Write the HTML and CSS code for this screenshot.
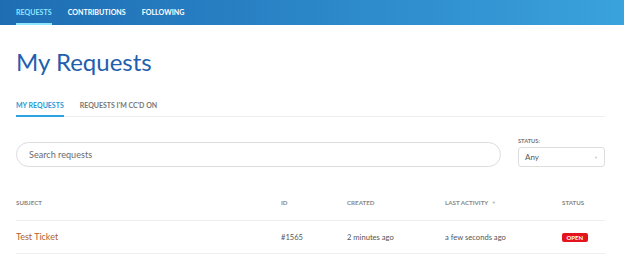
FILE: index.html
```html
<!DOCTYPE html>
<html lang="en">
<head>
  <meta charset="UTF-8" />
  <title>My Requests</title>
  <link rel="stylesheet" href="styles.css">
</head>
<body>

  <nav class="topnav">
    <a class="topnav-item active" href="#">Requests</a>
    <a class="topnav-item" href="#">Contributions</a>
    <a class="topnav-item" href="#">Following</a>
  </nav>

  <main class="page">
    <h1 class="title">My Requests</h1>

    <div class="tabs">
      <a class="tab active" href="#">My Requests</a>
      <a class="tab" href="#">Requests I'm CC'd on</a>
    </div>

    <div class="filters">
      <input class="search" type="text" placeholder="Search requests">
      <div class="status-filter">
        <label class="status-label">Status:</label>
        <div class="select">
          <span>Any</span>
          <span class="caret">&#9660;</span>
        </div>
      </div>
    </div>

    <table class="requests">
      <thead>
        <tr>
          <th class="col-subject">Subject</th>
          <th class="col-id">Id</th>
          <th class="col-created">Created</th>
          <th class="col-activity">Last activity <span class="sort">&#9660;</span></th>
          <th class="col-status">Status</th>
        </tr>
      </thead>
      <tbody>
        <tr>
          <td><a class="subject" href="#">Test Ticket</a></td>
          <td>#1565</td>
          <td>2 minutes ago</td>
          <td>a few seconds ago</td>
          <td><span class="badge">Open</span></td>
        </tr>
      </tbody>
    </table>
  </main>

</body>
</html>
```

FILE: styles.css
```css
* {
  margin: 0;
  padding: 0;
  box-sizing: border-box;
}

body {
  font-family: 'Lato', 'Open Sans', sans-serif;
  background-color: #fff;
  color: #555;
}

a {
  text-decoration: none;
}

/* Top navigation */
.topnav {
  display: flex;
  gap: 16px;
  height: 25px;
  padding: 0 16px;
  background: linear-gradient(90deg, #1e6db3, #2b86c8 50%, #3aa2dc);
}

.topnav-item {
  display: flex;
  align-items: center;
  height: 25px;
  color: #fff;
  font-size: 7.1px;
  font-weight: 700;
  text-transform: uppercase;
  border-bottom: 2px solid transparent;
  padding-top: 2px;
}

.topnav-item.active {
  color: #8fe6ff;
  border-bottom-color: #8fe6ff;
}

/* Page */
.page {
  padding: 0 19px 0 16px;
}

.title {
  font-size: 24px;
  font-weight: 400;
  color: #1f5fae;
  margin-top: 22px;
  line-height: 30px;
}

.tabs {
  display: flex;
  gap: 16px;
  margin-top: 24px;
  border-bottom: 1px solid #eee;
}

.tab {
  font-size: 7px;
  font-weight: 700;
  text-transform: uppercase;
  color: #777;
  padding-bottom: 6px;
  border-bottom: 2px solid transparent;
  margin-bottom: -1px;
}

.tab.active {
  color: #1f9ad6;
  border-bottom-color: #2ba3e0;
}

/* Filters */
.filters {
  display: flex;
  align-items: flex-end;
  gap: 17px;
  margin-top: 20px;
}

.search {
  flex: 1;
  height: 25px;
  border: 1px solid #ddd;
  border-radius: 13px;
  padding: 0 12px;
  font-family: inherit;
  font-size: 9.1px;
  color: #555;
}

.search::placeholder {
  color: #6b6b6b;
}

.status-filter {
  display: flex;
  flex-direction: column;
  width: 87px;
}

.status-label {
  font-size: 5.7px;
  font-weight: 700;
  text-transform: uppercase;
  color: #777;
  margin-bottom: 3px;
}

.select {
  display: flex;
  justify-content: space-between;
  align-items: center;
  height: 20px;
  border: 1px solid #ddd;
  border-radius: 3px;
  padding: 0 6px;
  font-size: 8px;
  color: #555;
}

.select .caret {
  color: #c8c8c8;
  font-size: 4px;
}

/* Table */
.requests {
  width: 100%;
  border-collapse: collapse;
  margin-top: 19px;
  font-size: 7.6px;
}

.requests th {
  text-align: left;
  font-size: 6.2px;
  font-weight: 700;
  text-transform: uppercase;
  color: #888;
  height: 34px;
  padding-bottom: 1px;
  border-bottom: 1px solid #eee;
}

.requests td {
  height: 33px;
  border-bottom: 1px solid #eee;
  color: #555;
}

.col-subject { width: 265px; }
.col-id { width: 66px; }
.col-created { width: 98px; }
.col-activity { width: 117px; }

.sort {
  color: #aaa;
  font-size: 4px;
  margin-left: 2px;
  vertical-align: 1px;
}

.subject {
  color: #b0612e;
  font-size: 9px;
}

.badge {
  display: inline-block;
  background-color: #e3141c;
  color: #fff;
  font-size: 6px;
  font-weight: 700;
  line-height: 9px;
  text-transform: uppercase;
  padding: 0 4.5px;
  border-radius: 2px;
}
```
